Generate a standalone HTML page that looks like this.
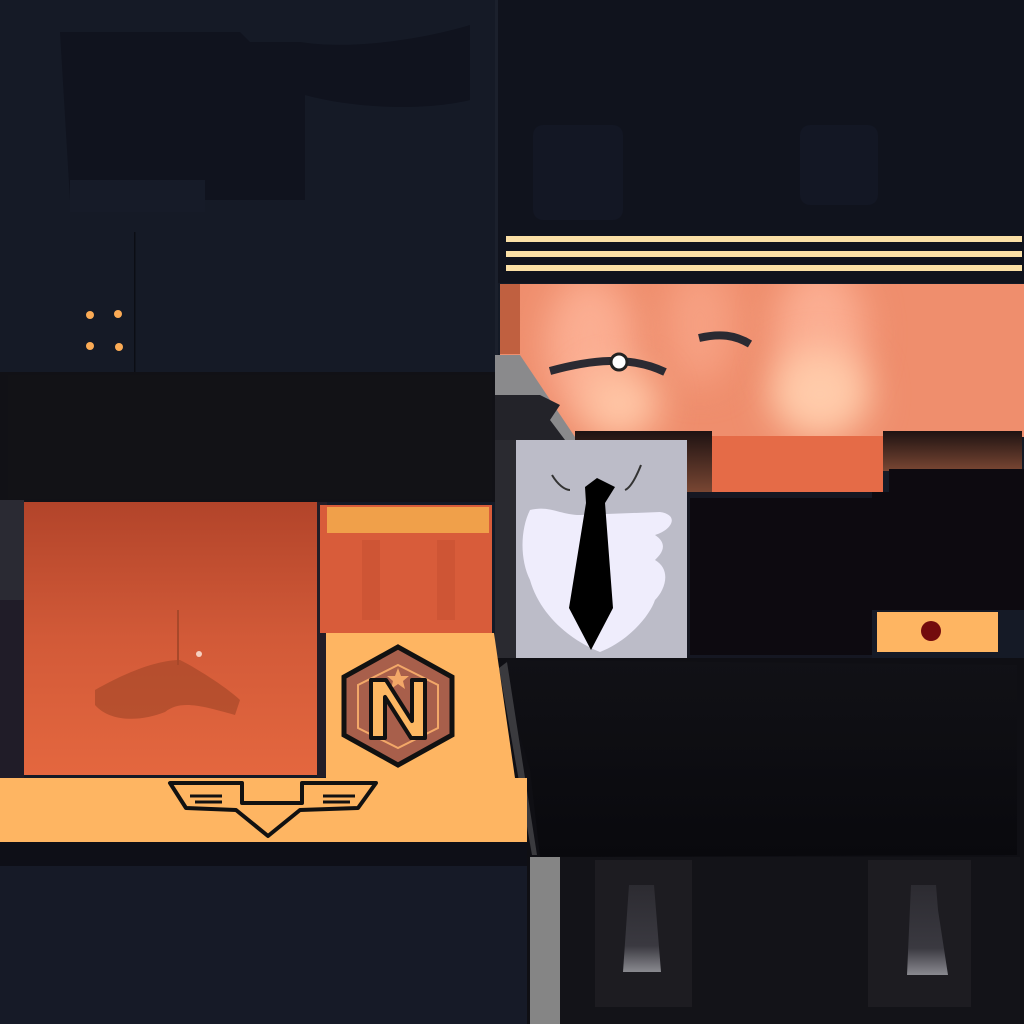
<!DOCTYPE html>
<html><head><meta charset="utf-8"><style>
html,body{margin:0;padding:0;width:1024px;height:1024px;overflow:hidden;background:#141a26}
svg{display:block}
</style></head><body>
<svg width="1024" height="1024" viewBox="0 0 1024 1024" xmlns="http://www.w3.org/2000/svg">
<defs>
<linearGradient id="body" x1="0" y1="0" x2="0" y2="1"><stop offset="0" stop-color="#b2442a"/><stop offset="0.5" stop-color="#d25a38"/><stop offset="1" stop-color="#e4673f"/></linearGradient>
<linearGradient id="brn" x1="0" y1="0" x2="0" y2="1"><stop offset="0" stop-color="#1e1212"/><stop offset="1" stop-color="#7a4733"/></linearGradient>
<linearGradient id="pants" x1="0" y1="0" x2="0" y2="1"><stop offset="0" stop-color="#111116"/><stop offset="1" stop-color="#09090d"/></linearGradient>
<linearGradient id="pock" x1="0" y1="0" x2="0" y2="1"><stop offset="0" stop-color="#2c2b31"/><stop offset="0.7" stop-color="#3a3940"/><stop offset="1" stop-color="#8a8a90"/></linearGradient>
<filter id="bl" x="-50%" y="-50%" width="200%" height="200%" color-interpolation-filters="sRGB"><feGaussianBlur stdDeviation="18"/></filter>
</defs>
<!-- left top -->
<rect x="0" y="0" width="495" height="372" fill="#151a26"/>
<path d="M60 32 H240 L250 42 H300 C350 50 420 40 470 25 V100 C430 110 360 110 305 95 V200 H70 Z" fill="#10131e"/>
<rect x="70" y="180" width="135" height="32" fill="#161b28"/>
<rect x="134" y="232" width="1.5" height="140" fill="#0b0d14"/>
<circle cx="90" cy="315" r="4" fill="#fbab55"/><circle cx="118" cy="314" r="4" fill="#fbab55"/>
<circle cx="90" cy="346" r="4" fill="#fbab55"/><circle cx="119" cy="347" r="4" fill="#fbab55"/>
<rect x="0" y="372" width="495" height="130" fill="#111116"/>
<rect x="8" y="375" width="484" height="124" fill="#121216"/>
<rect x="0" y="500" width="24" height="100" fill="#2a2a33"/>
<rect x="0" y="600" width="24" height="180" fill="#201c28"/>
<!-- orange body -->
<rect x="24" y="502" width="293" height="273" fill="url(#body)"/>
<path d="M95 690 C130 670 160 660 180 660 C200 670 230 690 240 700 L235 715 C200 705 180 700 165 712 C140 722 110 722 95 705 Z" fill="#a8482a" opacity="0.7"/>
<rect x="177" y="610" width="2" height="55" fill="#a8482a"/>
<circle cx="199" cy="654" r="3" fill="#f6d0c0"/>
<rect x="317" y="502" width="10" height="275" fill="#231d26"/>
<rect x="320" y="505" width="172" height="128" fill="#d85c3a"/>
<rect x="327" y="507" width="162" height="26" fill="#f0a04a"/>
<rect x="362" y="540" width="18" height="80" fill="#c44e30" opacity="0.5"/>
<rect x="437" y="540" width="18" height="80" fill="#c44e30" opacity="0.5"/>
<!-- right top -->
<rect x="495" y="0" width="529" height="283" fill="#10131d"/>
<rect x="495" y="0" width="3" height="500" fill="#1b202c"/>
<rect x="533" y="125" width="90" height="95" rx="10" fill="#131724"/>
<rect x="800" y="125" width="78" height="80" rx="10" fill="#131724"/>
<rect x="506" y="236" width="516" height="6" fill="#fbe0a6"/>
<rect x="506" y="251" width="516" height="6" fill="#fbe0a6"/>
<rect x="506" y="265" width="516" height="6" fill="#fbe0a6"/>
<!-- skin -->
<svg x="500" y="284" width="524" height="153" overflow="hidden">
<rect x="0" y="0" width="524" height="153" fill="#ef8e6d"/>
<ellipse cx="90" cy="60" rx="45" ry="70" fill="#fbae92" filter="url(#bl)"/>
<ellipse cx="200" cy="40" rx="35" ry="60" fill="#f6a082" filter="url(#bl)"/>
<ellipse cx="320" cy="50" rx="45" ry="70" fill="#fbae92" filter="url(#bl)"/>
<ellipse cx="320" cy="110" rx="50" ry="45" fill="#ffcbaa" filter="url(#bl)"/>
<ellipse cx="120" cy="120" rx="40" ry="35" fill="#ffc6a6" filter="url(#bl)"/>
<rect x="0" y="0" width="20" height="70" fill="#c06040"/>
</svg>
<path d="M495 355 H520 L575 437 V440 H495 Z" fill="#8a8a8c"/>
<path d="M495 395 H540 L560 405 L550 420 L565 440 H495 Z" fill="#232329"/>
<path d="M550 371 C590 360 630 355 665 372" stroke="#2b2a32" stroke-width="8" fill="none"/>
<circle cx="619" cy="362" r="8" fill="#fff" stroke="#222" stroke-width="3"/>
<path d="M699 338 C720 333 735 335 750 344" stroke="#2b2a32" stroke-width="8" fill="none"/>
<rect x="575" y="431" width="137" height="62" fill="url(#brn)"/>
<rect x="712" y="436" width="171" height="56" fill="#e56b47"/>
<rect x="883" y="431" width="139" height="40" fill="url(#brn)"/>
<!-- tie panel -->
<rect x="495" y="440" width="21" height="220" fill="#2a2a30"/>
<rect x="516" y="440" width="171" height="220" fill="#bcbcc8"/>
<path d="M530 510 C550 505 560 515 580 515 L660 512 C680 515 672 530 655 535 C670 545 660 555 655 560 C672 570 665 590 655 600 C650 615 630 640 600 652 C570 640 540 615 530 580 C520 560 520 530 530 510 Z" fill="#efedfc"/>
<path d="M552 475 C558 485 565 490 570 490 M641 465 C635 480 630 488 625 490" stroke="#333" stroke-width="2" fill="none"/>
<path d="M585 487 L597 478 L615 487 L605 503 L613 608 L591 650 L569 608 L586 503 Z" fill="#000"/>
<!-- black blocks -->
<rect x="687" y="492" width="190" height="166" fill="#151722"/>
<rect x="690" y="498" width="182" height="157" fill="#0d0a10"/>
<rect x="872" y="492" width="20" height="118" fill="#0d0a10"/>
<rect x="889" y="469" width="135" height="141" fill="#0d0a10"/>
<rect x="872" y="610" width="152" height="48" fill="#151a26"/>
<rect x="877" y="612" width="121" height="40" fill="#feb562"/>
<circle cx="931" cy="631" r="10" fill="#730b0d"/>
<!-- pants -->
<rect x="495" y="658" width="529" height="366" fill="#0f0f14"/>
<path d="M500 668 L507 660 L1017 665 V855 L540 857 L530 770 Z" fill="url(#pants)"/>
<path d="M499 668 L507 662 L537 855 L532 855 Z" fill="#3a3a3e"/>
<rect x="530" y="857" width="30" height="167" fill="#858585"/>
<rect x="560" y="857" width="460" height="167" fill="#131318"/>
<rect x="595" y="860" width="97" height="147" fill="#1d1c21"/>
<rect x="868" y="860" width="103" height="147" fill="#1d1c21"/>
<path d="M629 885 H654 L661 972 H623 Z" fill="url(#pock)"/>
<path d="M911 885 H936 L938 910 L948 975 H907 Z" fill="url(#pock)"/>
<!-- pale orange -->
<path d="M326 633 H494 L515 778 H527 V842 H0 V778 H326 Z" fill="#feb562"/>
<rect x="0" y="842" width="527" height="24" fill="#0e0f17"/>
<rect x="0" y="866" width="527" height="158" fill="#161a27"/>
<!-- badge -->
<polygon points="398,647 452,677 452,735 398,765 344,735 344,677" fill="#a85f4b" stroke="#111" stroke-width="5"/>
<polygon points="398,665 438,685 438,728 398,748 358,728 358,685" fill="none" stroke="#f3a868" stroke-width="2"/>
<polygon points="398,668 401,676 409,676 403,681 405,689 398,684 391,689 393,681 387,676 395,676" fill="#f3a868"/>
<path d="M371 680 H386 L412 721 V680 H425 V738 H411 L385 697 V738 H371 Z" fill="#fdb863" stroke="#111" stroke-width="4" stroke-linejoin="round"/>
<!-- wings -->
<path d="M170 783 H242 V803 H302 V783 H376 L358 808 L300 810 L268 836 L236 810 L186 808 Z" fill="none" stroke="#111" stroke-width="4" stroke-linejoin="round"/>
<path d="M190 796 H222 M195 802 H222 M323 796 H355 M323 802 H350" stroke="#111" stroke-width="3"/>
</svg>
</body></html>
